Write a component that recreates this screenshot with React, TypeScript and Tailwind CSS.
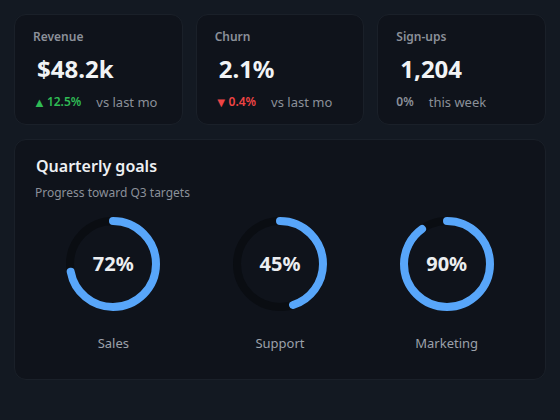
import React from 'react';

type Stat = {
  label: string;
  value: string;
  delta: string;
  tone: 'up' | 'down' | 'flat';
  note: string;
};

const stats: Stat[] = [
  { label: 'Revenue', value: '$48.2k', delta: '12.5%', tone: 'up', note: 'vs last mo' },
  { label: 'Churn', value: '2.1%', delta: '0.4%', tone: 'down', note: 'vs last mo' },
  { label: 'Sign-ups', value: '1,204', delta: '0%', tone: 'flat', note: 'this week' },
];

const goals = [
  { name: 'Sales', pct: 72 },
  { name: 'Support', pct: 45 },
  { name: 'Marketing', pct: 90 },
];

function StatCard({ stat }: { stat: Stat }) {
  const toneClass =
    stat.tone === 'up' ? 'text-[#30bb55]' : stat.tone === 'down' ? 'text-[#ef4444]' : 'text-[#8b9099]';

  return (
    <div className="h-[111px] rounded-xl border border-[#1a2029] bg-[#0f131b] pl-[18px] pt-[14px]">
      <div className="text-[12px] font-semibold leading-4 text-[#8b9099]">{stat.label}</div>
      <div className="mt-[8px] pl-1 text-[24px] font-bold leading-8 text-[#f1f3f5]">{stat.value}</div>
      <div className="mt-[9px] flex items-center gap-[15px] text-[12px] leading-4">
        <span className={`flex items-center gap-[1px] font-semibold ${toneClass}`}>
          {stat.tone === 'up' && <span className="text-[13px] leading-4">▲</span>}
          {stat.tone === 'down' && <span className="text-[13px] leading-4">▼</span>}
          {stat.delta}
        </span>
        <span className="text-[13px] text-[#8b9099]">{stat.note}</span>
      </div>
    </div>
  );
}

function Ring({ pct }: { pct: number }) {
  const r = 43;
  const c = 2 * Math.PI * r;
  return (
    <div className="relative h-[94px] w-[94px]">
      <svg width="94" height="94" viewBox="0 0 94 94" className="-rotate-90">
        <circle cx="47" cy="47" r={r} fill="none" stroke="#0a0d12" strokeWidth="8" />
        <circle
          cx="47"
          cy="47"
          r={r}
          fill="none"
          stroke="#58a6fa"
          strokeWidth="8"
          strokeLinecap="round"
          strokeDasharray={`${(c * pct) / 100} ${c}`}
        />
      </svg>
      <div className="absolute inset-0 flex items-center justify-center text-[20px] font-bold text-[#eceef1]">
        {pct}%
      </div>
    </div>
  );
}

export default function App() {
  return (
    <div
      className="h-[420px] w-[560px] bg-[#131922] p-[14px]"
      style={{ fontFamily: '"Noto Sans", "Open Sans", sans-serif' }}
    >
      <div className="grid grid-cols-3 gap-[13px]">
        {stats.map((s) => (
          <StatCard key={s.label} stat={s} />
        ))}
      </div>

      <div className="mt-[14px] h-[241px] rounded-xl border border-[#1a2029] bg-[#0f131b] pt-[14px]">
        <div className="pl-[21px] text-[16px] font-semibold leading-6 text-[#eef0f3]">Quarterly goals</div>
        <div className="mt-[7px] pl-[20px] text-[12px] leading-4 text-[#8b9099]">Progress toward Q3 targets</div>
        <div className="mt-[16px] grid grid-cols-3 px-[15px]">
          {goals.map((g) => (
            <div key={g.name} className="flex flex-col items-center">
              <Ring pct={g.pct} />
              <div className="mt-[24px] text-[13px] leading-4 text-[#9ca1aa]">{g.name}</div>
            </div>
          ))}
        </div>
      </div>
    </div>
  );
}
